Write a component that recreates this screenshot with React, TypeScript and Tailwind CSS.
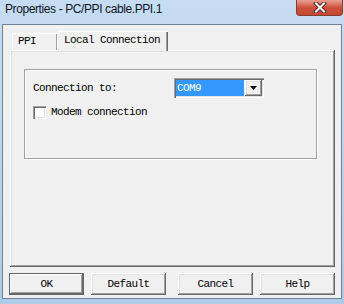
const MONO = "font-['Liberation_Mono',monospace] text-[11px] tracking-[-0.6px] text-black";

const RAISED =
  "shadow-[inset_-1px_-1px_#696969,inset_1px_1px_#ffffff,inset_-2px_-2px_#a0a0a0,inset_2px_2px_#e3e3e3]";

const SUNKEN =
  "shadow-[inset_1px_1px_#a0a0a0,inset_2px_2px_#696969,inset_-1px_-1px_#ffffff,inset_-2px_-2px_#e3e3e3]";

function Button({ label, primary, className }: { label: string; primary?: boolean; className?: string }) {
  return (
    <div
      className={`flex h-[22px] w-[75px] items-center justify-center bg-[#f0f0f0] ${MONO} ${
        primary
          ? "border border-[#646464] shadow-[inset_-1px_-1px_#696969,inset_1px_1px_#ffffff,inset_-2px_-2px_#a0a0a0]"
          : RAISED
      } ${className ?? ""}`}
    >
      {label}
    </div>
  );
}

export default function App() {
  return (
    <div className="flex h-[304px] w-[344px] flex-col overflow-hidden bg-gradient-to-b from-[#c5dcf2] via-[#bcd5ee] to-[#afcbe8]">
      {/* title bar */}
      <div className="flex h-[24px] shrink-0 items-start">
        <span className="pl-[5px] pt-[1px] font-['Liberation_Sans',sans-serif] text-[12px] leading-[16px] tracking-[-0.4px] text-[#10161f]">
          Properties - PC/PPI cable.PPI.1
        </span>
        <div className="ml-auto mr-[1px] flex h-[16px] w-[47px] items-center justify-center rounded-b-[4px] border border-t-0 border-[#8a3a2e] bg-gradient-to-b from-[#e8a093] via-[#d0503a] to-[#c24a32]">
          <svg width="14" height="11" viewBox="0 0 14 11">
            <path d="M3 1.5 L11 9.5 M11 1.5 L3 9.5" stroke="#4a2a26" strokeWidth="4" strokeLinecap="square" />
            <path d="M3 1.5 L11 9.5 M11 1.5 L3 9.5" stroke="#ffffff" strokeWidth="2" strokeLinecap="square" />
          </svg>
        </div>
      </div>

      {/* client area */}
      <div className="mx-[2px] flex h-[275px] flex-col border border-[#6f8296] bg-[#f0f0f0]">
        {/* tabs */}
        <div className="ml-[9px] mt-[6px] flex h-[19px] items-end">
          <div className={`flex h-[17px] w-[45px] items-center pl-[6px] ${MONO} shadow-[inset_1px_1px_#ffffff,inset_-1px_0_#a0a0a0]`}>
            PPI
          </div>
          <div
            className={`relative z-10 -mb-px flex h-[20px] w-[111px] items-center bg-[#f0f0f0] pb-[2px] pl-[7px] ${MONO} shadow-[inset_1px_1px_#ffffff,inset_-1px_0_#696969,inset_-2px_0_#a0a0a0]`}
          >
            Local Connection
          </div>
        </div>

        {/* tab panel */}
        <div className={`ml-[7px] h-[217px] w-[325px] bg-[#f0f0f0] pl-[14px] pt-[19px] ${RAISED}`}>
          <div className="h-[90px] w-[293px] border border-[#a0a0a0] shadow-[1px_1px_#ffffff,inset_1px_1px_#ffffff]">
            <div className="mt-[8px] flex h-[20px] items-center">
              <span className={`w-[149px] pl-[8px] ${MONO}`}>Connection to:</span>
              <div className={`flex h-[20px] w-[90px] items-center bg-white p-[2px] ${SUNKEN}`}>
                <div className="flex h-[16px] w-[68px] items-center bg-[#3399ff] pl-[1px] font-['Liberation_Mono',monospace] text-[11px] tracking-[-0.6px] text-white">
                  COM9
                </div>
                <div className={`ml-[1px] flex h-[16px] w-[17px] items-center justify-center bg-[#f0f0f0] ${RAISED}`}>
                  <svg width="7" height="4" viewBox="0 0 7 4">
                    <path d="M0 0 H7 L3.5 4 Z" fill="#000" />
                  </svg>
                </div>
              </div>
            </div>
            <div className="mt-[8px] flex h-[13px] items-center">
              <div className={`ml-[8px] h-[13px] w-[13px] bg-white ${SUNKEN}`} />
              <span className={`ml-[5px] ${MONO}`}>Modem connection</span>
            </div>
          </div>
        </div>

        {/* buttons */}
        <div className="mt-[6px] flex">
          <Button label="OK" primary className="ml-[6px]" />
          <Button label="Default" className="ml-[7px]" />
          <Button label="Cancel" className="ml-[12px]" />
          <Button label="Help" className="ml-[7px]" />
        </div>
      </div>
    </div>
  );
}
